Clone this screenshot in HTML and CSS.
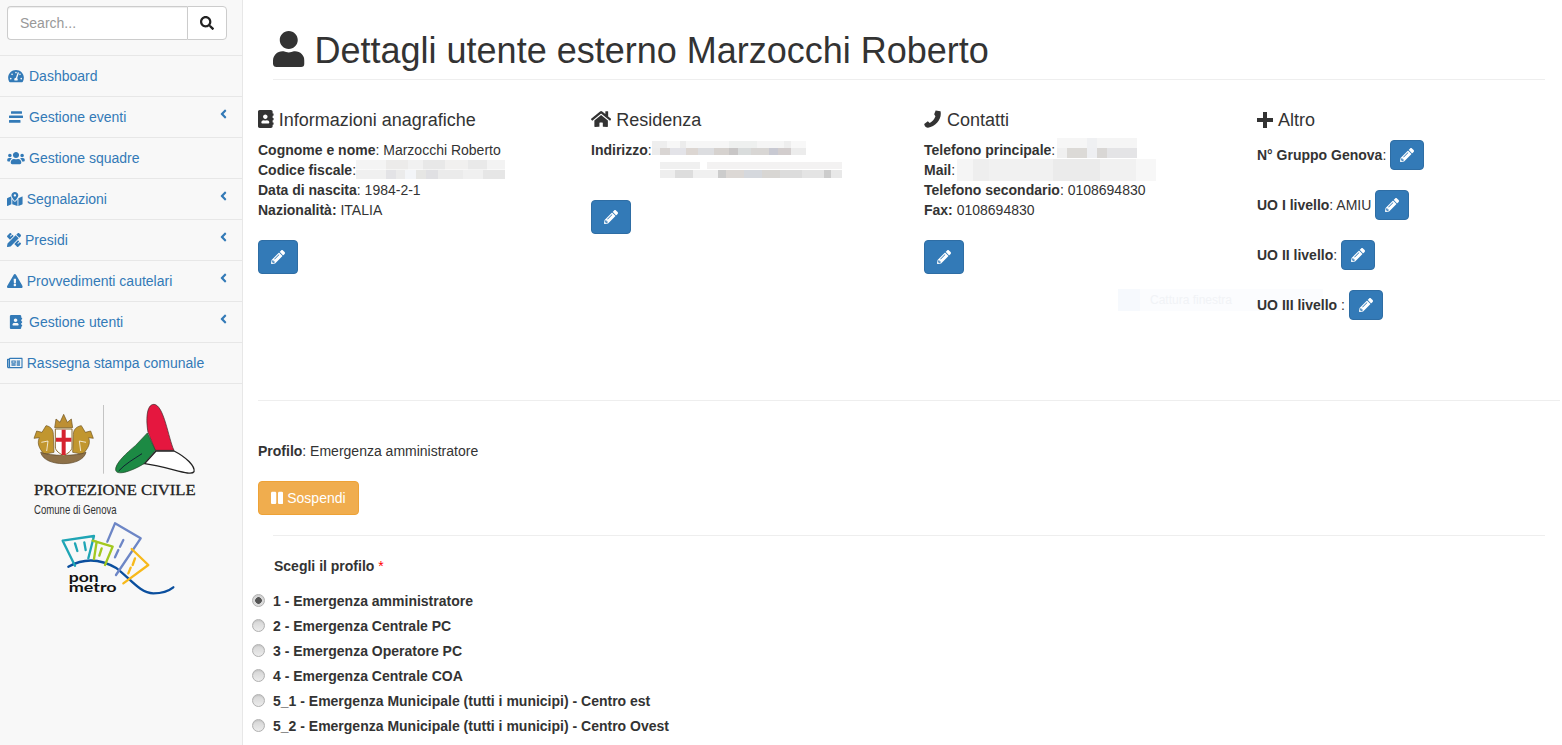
FILE: index.html
```html
<!DOCTYPE html>
<html lang="it">
<head>
<meta charset="utf-8">
<title>Dettagli utente esterno</title>
<link rel="stylesheet" href="styles.css">
</head>
<body>
<svg class="defs" width="0" height="0" aria-hidden="true">
  <symbol id="i-search" viewBox="0 0 512 512"><path d="M505 442.7L405.3 343c-4.5-4.5-10.6-7-17-7H372c27.6-35.3 44-79.7 44-128C416 93.1 322.9 0 208 0S0 93.1 0 208s93.1 208 208 208c48.3 0 92.7-16.4 128-44v16.3c0 6.4 2.5 12.5 7 17l99.7 99.7c9.4 9.4 24.6 9.4 33.9 0l28.3-28.3c9.4-9.4 9.4-24.6.1-34zM208 336c-70.7 0-128-57.2-128-128 0-70.7 57.2-128 128-128 70.7 0 128 57.2 128 128 0 70.7-57.2 128-128 128z"/></symbol>
  <symbol id="i-user" viewBox="0 0 448 512"><path d="M224 256c70.7 0 128-57.3 128-128S294.7 0 224 0 96 57.3 96 128s57.3 128 128 128zm89.6 32h-16.7c-22.2 10.2-46.9 16-72.9 16s-50.6-5.8-72.9-16h-16.7C60.2 288 0 348.2 0 422.4V464c0 26.5 21.5 48 48 48h352c26.5 0 48-21.5 48-48v-41.6c0-74.2-60.2-134.4-134.4-134.4z"/></symbol>
  <symbol id="i-home" viewBox="0 0 576 512"><path d="M280.37 148.26L96 300.11V464a16 16 0 0 0 16 16l112.06-.29a16 16 0 0 0 15.92-16V368a16 16 0 0 1 16-16h64a16 16 0 0 1 16 16v95.64a16 16 0 0 0 16 16.05L464 480a16 16 0 0 0 16-16V300L295.67 148.26a12.19 12.19 0 0 0-15.3 0zM571.6 251.47L488 182.56V44.05a12 12 0 0 0-12-12h-56a12 12 0 0 0-12 12v72.61L318.47 43a48 48 0 0 0-61 0L4.34 251.47a12 12 0 0 0-1.6 16.9l25.5 31A12 12 0 0 0 45.15 301l235.22-193.74a12.19 12.19 0 0 1 15.3 0L530.9 301a12 12 0 0 0 16.9-1.6l25.5-31a12 12 0 0 0-1.7-16.93z"/></symbol>
  <symbol id="i-phone" viewBox="0 0 17 17"><path d="M11 .4L15.6 1.2C17.2 8 11.4 15.4 3.8 16.8 2.4 16.9 1 15.9.4 14.2L.2 13.2 3.6 10.6 5.4 12.2C7.8 10.9 10 8.4 10.8 5.8L9.6 3.9Z"/></symbol>
  <symbol id="i-pencil" viewBox="0 0 512 512"><path d="M497.9 142.1l-46.1 46.1c-4.7 4.7-12.3 4.7-17 0l-111-111c-4.7-4.7-4.7-12.3 0-17l46.1-46.1c18.7-18.7 49.1-18.7 67.9 0l60.1 60.1c18.8 18.7 18.8 49.1 0 67.9zM284.2 99.8L21.6 362.4.4 483.9c-2.9 16.4 11.4 30.6 27.8 27.8l121.5-21.3 262.6-262.6c4.7-4.7 4.7-12.3 0-17l-111-111c-4.8-4.7-12.4-4.7-17.1 0zM124.1 339.9c-5.5-5.5-5.5-14.3 0-19.8l154-154c5.5-5.5 14.3-5.5 19.8 0s5.5 14.3 0 19.8l-154 154c-5.5 5.5-14.3 5.5-19.8 0zM88 424h48v36.3l-64.5 11.3-31.1-31.1L51.7 376H88v48z"/></symbol>
  <symbol id="i-gauge" viewBox="0 0 576 512"><path d="M288 32C128.94 32 0 160.94 0 320c0 52.8 14.25 102.26 39.06 144.8 5.61 9.62 16.3 15.2 27.44 15.2h443c11.14 0 21.83-5.58 27.44-15.2C561.75 422.26 576 372.8 576 320c0-159.06-128.94-288-288-288zm0 64c14.71 0 26.58 10.13 30.32 23.65-1.11 2.26-2.64 4.23-3.45 6.67l-9.22 27.67c-5.13 3.49-10.97 6.01-17.64 6.01-17.67 0-32-14.33-32-32S270.33 96 288 96zM96 384c-17.67 0-32-14.33-32-32s14.33-32 32-32 32 14.33 32 32-14.33 32-32 32zm48-160c-17.67 0-32-14.33-32-32s14.33-32 32-32 32 14.33 32 32-14.33 32-32 32zm246.77-72.41l-61.33 184C343.13 347.33 352 364.54 352 384c0 11.72-3.38 22.55-8.88 32H232.88c-5.5-9.45-8.88-20.28-8.88-32 0-33.94 26.5-61.43 59.9-63.59l61.34-184.01c4.17-12.56 17.73-19.45 30.36-15.17 12.57 4.19 19.35 17.79 15.17 30.36zm14.66 57.2l15.52-46.55c3.47-1.29 7.13-2.23 11.05-2.23 17.67 0 32 14.33 32 32s-14.33 32-32 32c-11.38-.01-20.89-6.28-26.57-15.22zM480 384c-17.67 0-32-14.33-32-32s14.33-32 32-32 32 14.33 32 32-14.33 32-32 32z"/></symbol>
  <symbol id="i-stream" viewBox="0 0 18 14"><path d="M4.5 1.2h10a.5.5 0 0 1 .5.5v1.6a.5.5 0 0 1-.5.5h-10a.5.5 0 0 1-.5-.5V1.700a.5.5 0 0 1 .5-.5zM2.500 5.400h13a.5.5 0 0 1 .5.5v1.600a.5.5 0 0 1-.5.5h-13a.5.5 0 0 1-.5-.5V5.900a.5.5 0 0 1 .5-.5zM2.500 10h10.500a.5.5 0 0 1 .5.5v1.700a.5.5 0 0 1-.5.5H2.500a.5.5 0 0 1-.5-.5v-1.700a.5.5 0 0 1 .5-.5z"/></symbol>
  <symbol id="i-users" viewBox="0 0 640 512"><path d="M96 224c35.3 0 64-28.7 64-64s-28.7-64-64-64-64 28.7-64 64 28.7 64 64 64zm448 0c35.3 0 64-28.7 64-64s-28.7-64-64-64-64 28.7-64 64 28.7 64 64 64zm32 32h-64c-17.6 0-33.5 7.1-45.1 18.6 40.3 22.1 68.9 62 75.1 109.4h66c17.7 0 32-14.3 32-32v-32c0-35.3-28.7-64-64-64zm-256 0c61.9 0 112-50.1 112-112S381.9 32 320 32 208 82.1 208 144s50.1 112 112 112zm76.8 32h-8.3c-20.8 10-43.9 16-68.5 16s-47.6-6-68.5-16h-8.3C179.6 288 128 339.6 128 403.2V432c0 26.5 21.5 48 48 48h288c26.5 0 48-21.5 48-48v-28.8c0-63.6-51.6-115.2-115.2-115.2zm-223.7-13.4C161.5 263.1 145.6 256 128 256H64c-35.3 0-64 28.7-64 64v32c0 17.7 14.3 32 32 32h65.9c6.3-47.4 34.9-87.3 75.2-109.4z"/></symbol>
  <symbol id="i-map" viewBox="0 0 576 512"><path d="M288 0c-69.59 0-126 56.41-126 126 0 56.26 82.35 158.8 113.9 196.02 6.39 7.54 17.82 7.54 24.2 0C331.65 284.8 414 182.26 414 126 414 56.41 357.59 0 288 0zm0 168c-23.2 0-42-18.8-42-42s18.8-42 42-42 42 18.8 42 42-18.8 42-42 42zM20.12 215.95A32.006 32.006 0 0 0 0 245.66v250.32c0 11.32 11.43 19.06 21.94 14.86L160 448V214.92c-8.84-15.98-16.07-31.54-21.25-46.42L20.12 215.95zM288 359.67c-14.07 0-27.38-6.18-36.51-16.96-19.66-23.2-40.57-49.62-59.49-76.72V448l192 64V266c-18.92 27.09-39.82 53.52-59.49 76.72-9.13 10.77-22.44 16.95-36.51 16.95zm266.06-198.51L416 224v288l139.88-55.95A31.996 31.996 0 0 0 576 426.34V176.02c0-11.32-11.43-19.06-21.94-14.86z"/></symbol>
  <symbol id="i-tools" viewBox="0 0 512 512"><path d="M109.46 244.04l134.58-134.56-44.12-44.12-61.68 61.68a7.919 7.919 0 0 1-11.21 0l-11.21-11.21c-3.1-3.1-3.1-8.12 0-11.21l61.68-61.68-33.64-33.65C131.47-3.1 111.39-3.1 99 9.29L9.29 99c-12.38 12.39-12.39 32.47 0 44.86l100.17 100.18zm388.47-116.8c18.76-18.76 18.75-49.17 0-67.93l-45.25-45.25c-18.76-18.76-49.18-18.76-67.95 0l-46.02 46.01 113.2 113.2 46.02-46.03zM316.08 82.71l-297 296.96L.32 487.11c-2.53 14.49 10.09 27.11 24.59 24.56l107.45-18.84L429.28 195.9 316.08 82.71zm186.63 285.43l-33.64-33.64-61.68 61.68c-3.1 3.1-8.12 3.1-11.21 0l-11.21-11.21c-3.09-3.1-3.09-8.12 0-11.21l61.68-61.68-44.14-44.14L267.93 402.5l100.21 100.2c12.39 12.39 32.47 12.39 44.86 0l89.71-89.7c12.39-12.39 12.39-32.47 0-44.86z"/></symbol>
  <symbol id="i-warn" viewBox="0 0 576 512"><path d="M569.517 440.013C587.975 472.007 564.806 512 527.94 512H48.054c-36.937 0-59.999-40.055-41.577-71.987L246.423 23.985c18.467-32.009 64.72-31.951 83.154 0l239.94 416.028zM288 354c-25.405 0-46 20.595-46 46s20.595 46 46 46 46-20.595 46-46-20.595-46-46-46zm-43.673-165.346l7.418 136c.347 6.364 5.609 11.346 11.982 11.346h48.546c6.373 0 11.635-4.982 11.982-11.346l7.418-136c.375-6.874-5.098-12.654-11.982-12.654h-63.383c-6.884 0-12.356 5.78-11.981 12.654z"/></symbol>
  <symbol id="i-book" viewBox="0 0 448 512"><path d="M436 160c6.6 0 12-5.4 12-12v-40c0-6.6-5.4-12-12-12h-20V48c0-26.5-21.5-48-48-48H48C21.5 0 0 21.5 0 48v416c0 26.5 21.5 48 48 48h320c26.5 0 48-21.5 48-48v-48h20c6.6 0 12-5.4 12-12v-40c0-6.6-5.4-12-12-12h-20v-64h20c6.6 0 12-5.4 12-12v-40c0-6.6-5.4-12-12-12h-20v-64h20zm-228-32c35.3 0 64 28.7 64 64s-28.7 64-64 64-64-28.7-64-64 28.7-64 64-64zm112 236.8c0 10.6-10 19.2-22.4 19.2H118.4C106 384 96 375.4 96 364.8v-19.2c0-31.8 30.1-57.6 67.2-57.6h5c12.3 5.1 25.7 8 39.8 8s27.6-2.9 39.8-8h5c37.1 0 67.2 25.8 67.2 57.6v19.2z"/></symbol>
  <symbol id="i-news" viewBox="0 0 576 512"><path d="M552 64H112c-20.858 0-38.643 13.377-45.248 32H24c-13.255 0-24 10.745-24 24v272c0 30.928 25.072 56 56 56h496c13.255 0 24-10.745 24-24V88c0-13.255-10.745-24-24-24zM48 392V144h16v248c0 4.411-3.589 8-8 8s-8-3.589-8-8zm480 8H111.422c.374-2.614.578-5.283.578-8V112h416v288zM172 280h136c6.627 0 12-5.373 12-12v-96c0-6.627-5.373-12-12-12H172c-6.627 0-12 5.373-12 12v96c0 6.627 5.373 12 12 12zm28-80h80v40h-80v-40zm-40 140v-24c0-6.627 5.373-12 12-12h136c6.627 0 12 5.373 12 12v24c0 6.627-5.373 12-12 12H172c-6.627 0-12-5.373-12-12zm192 0v-24c0-6.627 5.373-12 12-12h104c6.627 0 12 5.373 12 12v24c0 6.627-5.373 12-12 12H364c-6.627 0-12-5.373-12-12zm0-144v-24c0-6.627 5.373-12 12-12h104c6.627 0 12 5.373 12 12v24c0 6.627-5.373 12-12 12H364c-6.627 0-12-5.373-12-12zm0 72v-24c0-6.627 5.373-12 12-12h104c6.627 0 12 5.373 12 12v24c0 6.627-5.373 12-12 12H364c-6.627 0-12-5.373-12-12z"/></symbol>
  <symbol id="i-angle" viewBox="0 0 256 512"><path d="M31.7 239l136-136c9.4-9.4 24.6-9.4 33.9 0l22.6 22.6c9.4 9.4 9.4 24.6 0 33.9L127.9 256l96.4 96.4c9.4 9.4 9.4 24.6 0 33.9L201.7 409c-9.4 9.4-24.6 9.4-33.9 0l-136-136c-9.5-9.4-9.5-24.6-.1-34z"/></symbol>
  <symbol id="i-pause" viewBox="0 0 448 512"><path d="M144 479H48c-26.5 0-48-21.5-48-48V79c0-26.5 21.5-48 48-48h96c26.5 0 48 21.5 48 48v352c0 26.5-21.5 48-48 48zm304-48V79c0-26.5-21.5-48-48-48h-96c-26.5 0-48 21.5-48 48v352c0 26.5 21.5 48 48 48h96c26.5 0 48-21.5 48-48z"/></symbol>
</svg>

<div class="layout">
  <aside class="sidebar">
    <div class="search">
      <input class="search-input" type="text" placeholder="Search...">
      <button class="search-btn" type="button"><svg class="ic ic-14"><use href="#i-search"/></svg></button>
    </div>
    <nav class="menu">
      <a class="menu-item" href="#"><svg class="ic ic-fw"><use href="#i-gauge"/></svg>Dashboard</a>
      <a class="menu-item" href="#"><svg class="ic ic-fw"><use href="#i-stream"/></svg>Gestione eventi<svg class="chev"><use href="#i-angle"/></svg></a>
      <a class="menu-item" href="#"><svg class="ic ic-fw"><use href="#i-users"/></svg>Gestione squadre</a>
      <a class="menu-item" href="#"><svg class="ic ic-wide"><use href="#i-map"/></svg>Segnalazioni<svg class="chev"><use href="#i-angle"/></svg></a>
      <a class="menu-item" href="#"><svg class="ic ic-14"><use href="#i-tools"/></svg>Presidi<svg class="chev"><use href="#i-angle"/></svg></a>
      <a class="menu-item" href="#"><svg class="ic ic-wide"><use href="#i-warn"/></svg>Provvedimenti cautelari<svg class="chev"><use href="#i-angle"/></svg></a>
      <a class="menu-item" href="#"><svg class="ic ic-fw"><use href="#i-book"/></svg>Gestione utenti<svg class="chev"><use href="#i-angle"/></svg></a>
      <a class="menu-item" href="#"><svg class="ic ic-wide"><use href="#i-news"/></svg>Rassegna stampa comunale</a>
    </nav>
    <svg class="logos" viewBox="0 0 570 630" role="img" aria-label="Protezione Civile Comune di Genova, PON Metro">
      <!-- Stemma -->
      <path d="M58 128 L42 130 L50 108 L66 112 L78 92 C92 94 100 104 100 118 L102 172 L72 178 C64 166 48 150 58 128Z" fill="#c1962f" stroke="#6e5320" stroke-width="2"/>
      <path d="M206 128 L220 130 L212 108 L196 112 L184 92 C170 94 160 104 160 118 L158 172 L188 178 C198 166 214 150 206 128Z" fill="#c1962f" stroke="#6e5320" stroke-width="2"/>
      <path d="M64 142 L84 138 L80 168 M198 142 L178 138 L182 168" stroke="#fff" stroke-width="3" fill="none" opacity=".75"/>
      <path d="M104 98 L108 72 L120 82 L131 58 L142 82 L154 72 L158 98 Z" fill="#bd8f33" stroke="#6e5320" stroke-width="2"/>
      <path d="M62 172 C90 184 170 184 198 172 C192 196 160 206 130 206 C100 206 68 196 62 172Z" fill="#8e7148" stroke="#5b4526" stroke-width="2"/>
      <path d="M106 102 H156 V156 C156 168 142 176 131 182 C120 176 106 168 106 156Z" fill="#fff" stroke="#8d6c2e" stroke-width="3"/>
      <path d="M125 104 H137 V128 H154 V140 H137 V180 H125 V140 H108 V128 H125Z" fill="#d5232f"/>
      <rect x="249" y="30" width="3" height="206" fill="#c4c4c4"/>
      <!-- Stella protezione civile -->
      <path d="M402 28 C378 28 378 78 384 112 L406 166 H462 C445 130 432 30 402 28Z" fill="#e5173f" stroke="#3a2a2a" stroke-width="2"/>
      <path d="M382 114 L406 166 L372 206 C340 226 292 244 287 226 C284 205 322 172 346 152Z" fill="#1c8a44" stroke="#1f3f25" stroke-width="2"/>
      <path d="M408 168 H462 C498 186 526 214 522 230 C514 246 450 216 374 206Z" fill="#fff" stroke="#222" stroke-width="4"/>
      <path d="M296 228 C316 206 342 192 366 176" stroke="#123" stroke-width="3" fill="none"/>
      <text class="logo-pc" x="42" y="300" textLength="485" lengthAdjust="spacingAndGlyphs">PROTEZIONE CIVILE</text>
      <text class="logo-com" x="42" y="356" textLength="248" lengthAdjust="spacingAndGlyphs">Comune di Genova</text>
      <!-- PON Metro -->
      <g fill="none" stroke-linecap="round" stroke-linejoin="round">
        <path d="M145 515 C190 490 240 490 290 520 C330 550 360 595 400 595 C430 595 450 585 460 577" stroke="#0b4f9e" stroke-width="7"/>
        <path d="M165 512 L128 437 L222 423 L205 490 M165 445 L172 468 M193 442 L197 465" stroke="#1fa5b5" stroke-width="7"/>
        <path d="M222 492 L230 440 L218 437 L278 455 L255 510 M245 460 L238 482" stroke="#a3c820" stroke-width="7"/>
        <path d="M262 440 L285 385 L362 430 L288 540 M310 435 L300 455 M295 465 L285 487" stroke="#6d86c6" stroke-width="7"/>
        <path d="M335 462 L385 510 L310 565 M345 490 L338 510 M332 518 L325 535" stroke="#f7b91b" stroke-width="7"/>
      </g>
      <text class="logo-pon" x="146" y="560" textLength="90" lengthAdjust="spacingAndGlyphs">pon</text>
      <text class="logo-pon" x="146" y="591" textLength="144" lengthAdjust="spacingAndGlyphs">metro</text>
    </svg>
  </aside>

  <main class="main">
    <h1 class="page-title"><svg class="title-ic"><use href="#i-user"/></svg>Dettagli utente esterno Marzocchi Roberto</h1>

    <div class="details">
      <section class="col">
        <h4 class="col-head"><svg class="head-ic head-book"><use href="#i-book"/></svg>Informazioni anagrafiche</h4>
        <div class="lines">
          <div><b>Cognome e nome</b>: Marzocchi Roberto</div>
          <div><b>Codice fiscale</b>:<span class="blur blur-cf"></span></div>
          <div><b>Data di nascita</b>: 1984-2-1</div>
          <div><b>Nazionalità:</b> ITALIA</div>
        </div>
        <button class="btn btn-edit" type="button"><svg class="pen"><use href="#i-pencil"/></svg></button>
      </section>

      <section class="col">
        <h4 class="col-head"><svg class="head-ic head-home"><use href="#i-home"/></svg>Residenza</h4>
        <div class="lines">
          <div><b>Indirizzo</b>:<span class="blur blur-ad1"></span></div>
          <div class="addr-2"><span class="blur blur-ad2"></span></div>
        </div>
        <button class="btn btn-edit" type="button"><svg class="pen"><use href="#i-pencil"/></svg></button>
      </section>

      <section class="col">
        <h4 class="col-head"><svg class="head-ic head-phone"><use href="#i-phone"/></svg>Contatti</h4>
        <div class="lines">
          <div><b>Telefono principale</b>:<span class="blur blur-tel"></span></div>
          <div><b>Mail</b>:<span class="blur blur-mail"></span></div>
          <div><b>Telefono secondario</b>: 0108694830</div>
          <div><b>Fax:</b> 0108694830</div>
        </div>
        <button class="btn btn-edit" type="button"><svg class="pen"><use href="#i-pencil"/></svg></button>
      </section>

      <section class="col">
        <h4 class="col-head"><span class="head-plus"></span>Altro</h4>
        <div class="extra"><span><b>N° Gruppo Genova</b>:</span><button class="btn btn-sm" type="button"><svg class="pen"><use href="#i-pencil"/></svg></button></div>
        <div class="extra"><span><b>UO I livello</b>: AMIU</span><button class="btn btn-sm" type="button"><svg class="pen"><use href="#i-pencil"/></svg></button></div>
        <div class="extra"><span><b>UO II livello</b>:</span><button class="btn btn-sm" type="button"><svg class="pen"><use href="#i-pencil"/></svg></button></div>
        <div class="extra"><span><b>UO III livello</b> :</span><button class="btn btn-sm" type="button"><svg class="pen"><use href="#i-pencil"/></svg></button></div>
      </section>
    </div>

    <hr class="rule-wide">

    <div class="profile">
      <div class="profile-line"><b>Profilo</b>: Emergenza amministratore</div>
      <button class="btn-warn" type="button"><svg class="pause"><use href="#i-pause"/></svg>Sospendi</button>
    </div>

    <hr class="rule-inset">

    <form class="choose">
      <div class="choose-label">Scegli il profilo <span class="req">*</span></div>
      <label class="radio"><input type="radio" name="p" checked>1 - Emergenza amministratore</label>
      <label class="radio"><input type="radio" name="p">2 - Emergenza Centrale PC</label>
      <label class="radio"><input type="radio" name="p">3 - Emergenza Operatore PC</label>
      <label class="radio"><input type="radio" name="p">4 - Emergenza Centrale COA</label>
      <label class="radio"><input type="radio" name="p">5_1 - Emergenza Municipale (tutti i municipi) - Centro est</label>
      <label class="radio"><input type="radio" name="p">5_2 - Emergenza Municipale (tutti i municipi) - Centro Ovest</label>
    </form>

    <div class="ghost"><span class="ghost-play"></span><span class="ghost-text">Cattura finestra</span></div>
  </main>
</div>
</body>
</html>
```
FILE: styles.css
```css
* { box-sizing: border-box; }
html, body { margin: 0; height: 100%; overflow: hidden; }
body {
  font-family: "Liberation Sans", Arial, sans-serif;
  font-size: 14px;
  line-height: 20px;
  color: #333;
  background: #fff;
}
.defs { position: absolute; }
.layout { display: flex; height: 745px; }

/* Sidebar */
.sidebar {
  width: 243px;
  flex: none;
  background: #f8f8f8;
  border-right: 1px solid #e7e7e7;
}
.search {
  display: flex;
  height: 56px;
  padding: 6px 7px;
  border-bottom: 1px solid #e7e7e7;
}
.search-input {
  width: 180px;
  height: 34px;
  padding: 6px 12px;
  border: 1px solid #ccc;
  border-right: 0;
  border-radius: 4px 0 0 4px;
  font: 14px/20px "Liberation Sans", Arial, sans-serif;
  color: #555;
  box-shadow: inset 0 1px 1px rgba(0, 0, 0, .075);
  outline: 0;
}
.search-input::placeholder { color: #999; opacity: 1; }
.search-btn {
  width: 40px;
  height: 34px;
  padding: 0;
  display: flex;
  align-items: center;
  justify-content: center;
  background: #fff;
  border: 1px solid #ccc;
  border-radius: 0 4px 4px 0;
  fill: #222;
}
.menu { display: flex; flex-direction: column; }
.menu-item {
  display: flex;
  align-items: center;
  height: 41px;
  padding-left: 7px;
  border-bottom: 1px solid #e7e7e7;
  color: #337ab7;
  text-decoration: none;
  fill: #337ab7;
}
.ic { height: 14px; flex: none; margin-right: 4px; }
.search-btn .ic { margin: 0; }
.ic-14 { width: 14px; }
.ic-fw { width: 18px; }
.ic-wide { width: 15.75px; }
.chev {
  width: 7px;
  height: 14px;
  margin: 0 15px 6px auto;
  flex: none;
}
.logos { display: block; width: 190px; height: 210px; margin: 11px 0 0 20px; }
.logo-pc { font: 45px "Liberation Serif", "Times New Roman", serif; fill: #222; stroke: #222; stroke-width: .8px; }
.logo-com { font: 38px "Liberation Sans Narrow", "Liberation Sans", Arial, sans-serif; fill: #333; }
.logo-pon { font: 700 40px Lato, "Liberation Sans", Arial, sans-serif; fill: #111; }

/* Main */
.main { position: relative; flex: 1; min-width: 0; padding-right: 2px; }
.page-title {
  display: flex;
  align-items: flex-start;
  gap: 10px;
  margin: 30px 15px 29px 30px;
  padding-bottom: 9px;
  height: 50px;
  border-bottom: 1px solid #eee;
  font-size: 36px;
  font-weight: 400;
  line-height: 42px;
}
.title-ic { width: 31.5px; height: 36px; margin-top: 1px; fill: #333; flex: none; }

.details {
  position: relative;
  z-index: 1;
  display: grid;
  grid-template-columns: 333px 333px 333px 1fr;
  margin-left: 15px;
}
.col-head {
  display: flex;
  align-items: flex-start;
  gap: 5px;
  height: 20px;
  margin: 0 0 11px;
  font-size: 18px;
  font-weight: 400;
  line-height: 22px;
}
.head-ic { height: 18px; margin-top: 1px; flex: none; fill: #333; }
.head-book { width: 15.75px; }
.head-home { width: 20.25px; }
.head-phone { width: 18px; }
.head-plus {
  width: 16px;
  height: 16px;
  margin-top: 3px;
  background:
    linear-gradient(#333, #333) center / 100% 4px no-repeat,
    linear-gradient(#333, #333) center / 4px 100% no-repeat;
  flex: none;
}
.lines { margin-bottom: 20px; }
.lines b, .extra b, .profile-line b { font-weight: 700; }
.addr-2 { padding-left: 69px; }

.blur { display: inline-block; vertical-align: top; }
.blur-cf {
  width: 149px; height: 19px;
  background:
    linear-gradient(90deg, #f4f4f4 0 20%, #ecebea 20% 35%, #f1f1f1 35% 45%, #e8e8e8 45% 60%, #f1f0ef 60% 75%, #e9e9e9 75% 88%, #f3f3f3 88%) top / 100% 50% no-repeat,
    linear-gradient(90deg, #f0f0f0 0 20%, #e3e3e6 20% 27%, #ebebeb 27% 33%, #f3f5f8 33% 40%, #e6e6e4 40% 47%, #e0e0e3 47% 55%, #ebebeb 55% 72%, #f0f0f0 72% 85%, #e6e6e6 85%) bottom / 100% 50% no-repeat;
}
.blur-ad1 {
  width: 154px; height: 14px; margin-top: 1px;
  background:
    linear-gradient(90deg, #eee 0 10%, #f7f7f7 10% 18%, #ececec 18% 22%, #f6f6f6 22% 50%, #eef0ef 50% 68%, #f5f5f5 68% 86%, #eee 86% 90%, #f8f8f8 90%) top / 100% 50% no-repeat,
    linear-gradient(90deg, #ececec 0 5%, #d9d5d3 5% 12%, #e3e3e8 12% 22%, #dcd6d2 22% 30%, #dcdde0 30% 40%, #d6d2cf 40% 50%, #c8c6c6 50% 56%, #d9dcdc 56% 64%, #d8d6d4 64% 76%, #c8c9d2 76% 82%, #d2cdcd 82% 90%, #ececec 90%) bottom / 100% 50% no-repeat;
}
.blur-ad2 {
  width: 182px; height: 18px; margin-top: 2px;
  background:
    linear-gradient(90deg, #f0f0f0 0 22%, #fff 22% 26%, #f3f2f2 26% 100%) top / 100% 40% no-repeat,
    linear-gradient(90deg, #eee 0 8%, #ddd 8% 18%, #f0f0f0 18% 32%, #ccc 32% 36%, #dcd8d5 36% 46%, #d5d8dd 46% 56%, #d8d6d3 56% 66%, #dcdcdc 66% 78%, #e4e4e4 78% 90%, #ccc 90% 94%, #e8e8e8 94%) 0 8px / 100% 8px no-repeat;
}
.blur-tel {
  width: 80px; height: 20px; margin: -2px 0 0 2px;
  background:
    linear-gradient(90deg, #f6f6f6 0 38%, #eff0f2 38% 50%, #f5f5f5 50%) top / 100% 50% no-repeat,
    linear-gradient(90deg, #f0f0f0 0 12%, #dcdad7 12% 38%, #eeeff2 38% 50%, #d9d7d5 50% 62%, #e4e4e6 62% 100%) bottom / 100% 50% no-repeat;
}
.blur-mail {
  width: 199px; height: 22px; margin: -1px -1px -1px 2px;
  background: linear-gradient(90deg, #f5f5f5 0 8%, #eee 8% 16%, #f1f1f1 16% 48%, #ebebeb 48% 72%, #f1f1f1 72% 90%, #f7f7f7 90%);
}

.btn {
  display: flex;
  align-items: center;
  justify-content: center;
  padding: 0;
  background: #337ab7;
  border: 1px solid #2e6da4;
  border-radius: 4px;
}
.btn-edit { width: 40px; height: 34px; }
.btn-sm { width: 34px; height: 30px; flex: none; }
.pen { width: 14px; height: 14px; fill: #fff; }
.extra {
  display: flex;
  align-items: center;
  gap: 4px;
  height: 30px;
  margin-bottom: 20px;
}

.rule-wide, .rule-inset { margin: 0; border: 0; border-top: 1px solid #eee; }
.rule-wide { margin: 60px 0 40px 15px; }
.profile { margin-left: 15px; }
.profile-line { margin-bottom: 20px; }
.btn-warn {
  display: flex;
  align-items: center;
  gap: 4px;
  width: 101px;
  height: 34px;
  padding: 0 0 0 12px;
  background: #f0ad4e;
  border: 1px solid #eea236;
  border-radius: 4px;
  color: #fff;
  fill: #fff;
  font: 14px/20px "Liberation Sans", Arial, sans-serif;
}
.pause { width: 12.25px; height: 14px; flex: none; }
.rule-inset { margin: 20px 15px 20px 30px; }

.choose { margin-left: 10px; font-weight: 700; }
.choose-label { margin: 0 0 12px 21px; }
.req { color: red; font-weight: 400; }
.radio { display: flex; align-items: center; height: 25px; margin-left: -1px; }
.radio input {
  appearance: none;
  width: 13px;
  height: 13px;
  margin: 0 8px 0 0;
  flex: none;
  border: 1px solid #b0b0b0;
  border-radius: 50%;
  background: linear-gradient(#d4d4d4, #ececec);
  box-shadow: inset 0 1px 1px rgba(0, 0, 0, .08);
}
.radio input:checked {
  background: radial-gradient(circle, #555 0 3px, #d8d8d8 3.6px, #e8e8e8 100%);
}

/* Faint capture-tool overlay */
.ghost {
  position: absolute;
  left: 875px;
  top: 289px;
  display: flex;
  align-items: center;
  width: 205px;
  height: 22px;
  background: #fbfcfe;
  pointer-events: none;
}
.ghost-play { width: 22px; height: 22px; background: #f6f9fd; margin-right: 10px; flex: none; }
.ghost-text { font-size: 12px; color: #f1f3f6; }
```
